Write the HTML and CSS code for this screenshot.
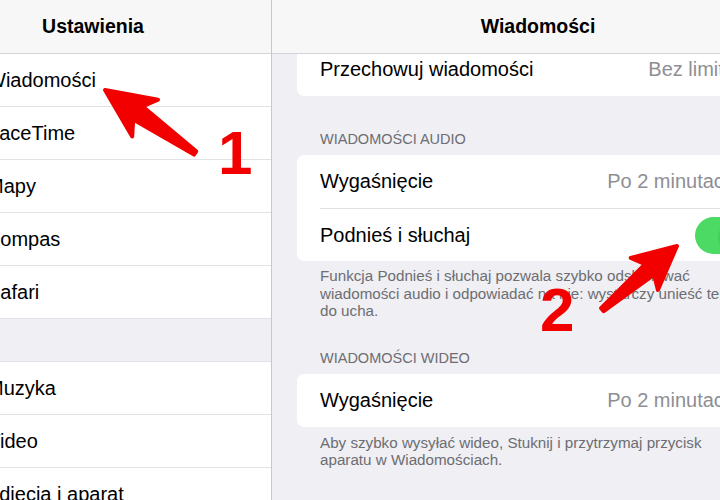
FILE: index.html
```html
<!DOCTYPE html>
<html lang="pl">
<head>
<meta charset="utf-8">
<title>Ustawienia – Wiadomości</title>
<link rel="stylesheet" href="styles.css">
</head>
<body>
<div class="screen">
  <aside class="master">
    <header class="nav">Ustawienia</header>
    <ul class="list">
      <li class="row">Wiadomości</li>
      <li class="row">FaceTime</li>
      <li class="row">Mapy</li>
      <li class="row">Kompas</li>
      <li class="row">Safari</li>
    </ul>
    <div class="group-gap"></div>
    <ul class="list list-top">
      <li class="row">Muzyka</li>
      <li class="row">Video</li>
      <li class="row">Zdjęcia i aparat</li>
    </ul>
  </aside>
  <main class="detail">
    <header class="nav nav-over">Wiadomości</header>
    <div class="content">
      <section class="card">
        <div class="cell">
          <span class="label">Przechowuj wiadomości</span>
          <span class="value">Bez limitu</span>
          <svg class="chev" width="9" height="15" viewBox="0 0 9 15"><path d="M1 1l6.5 6.5L1 14" fill="none" stroke="#c7c7cc" stroke-width="2"/></svg>
        </div>
      </section>
      <h2 class="section-header">Wiadomości audio</h2>
      <section class="card">
        <div class="cell">
          <span class="label">Wygaśnięcie</span>
          <span class="value">Po 2 minutach</span>
          <svg class="chev" width="9" height="15" viewBox="0 0 9 15"><path d="M1 1l6.5 6.5L1 14" fill="none" stroke="#c7c7cc" stroke-width="2"/></svg>
        </div>
        <div class="cell">
          <span class="label">Podnieś i słuchaj</span>
          <span class="toggle"><span class="knob"></span></span>
        </div>
      </section>
      <p class="footer">Funkcja Podnieś i słuchaj pozwala szybko odsłuchiwać<br>wiadomości audio i odpowiadać na nie: wystarczy unieść telefon<br>do ucha.</p>
      <h2 class="section-header after-footer">Wiadomości wideo</h2>
      <section class="card">
        <div class="cell">
          <span class="label">Wygaśnięcie</span>
          <span class="value">Po 2 minutach</span>
          <svg class="chev" width="9" height="15" viewBox="0 0 9 15"><path d="M1 1l6.5 6.5L1 14" fill="none" stroke="#c7c7cc" stroke-width="2"/></svg>
        </div>
      </section>
      <p class="footer footer-video">Aby szybko wysyłać wideo, Stuknij i przytrzymaj przycisk<br>aparatu w Wiadomościach.</p>
    </div>
  </main>
</div>
<div class="annot">
  <svg class="arrows" width="720" height="500" viewBox="0 0 720 500">
    <polygon points="105,90 158,99.7 142.4,106.3 196.2,151.4 194,154.6 133.2,119.5 132.2,136.5" fill="#f20000" stroke="#f20000" stroke-width="4" stroke-linejoin="round"/>
    <polygon points="677,246 630.7,257.9 645.1,264.1 601.1,308.1 603.7,311.1 654.1,274.7 657.9,289.9" fill="#f20000" stroke="#f20000" stroke-width="4" stroke-linejoin="round"/>
  </svg>
  <span class="num num-1">1</span>
  <span class="num num-2">2</span>
</div>
</body>
</html>
```
FILE: styles.css
```css
* { box-sizing: border-box; }
html, body {
  margin: 0;
  padding: 0;
  width: 720px;
  height: 500px;
  overflow: hidden;
  background: #ffffff;
  font-family: "Liberation Sans", Arial, sans-serif;
  color: #000;
}
.screen {
  display: flex;
  width: 889px;
  height: 500px;
  margin-left: -85px;
}
.master {
  width: 357px;
  flex: none;
  background: #efeff4;
  border-right: 1px solid #c8c7cc;
}
.nav {
  height: 54px;
  margin: 0;
  background: #f7f7f7;
  border-bottom: 1px solid #d4d4d8;
  display: flex;
  align-items: center;
  justify-content: center;
  font-weight: bold;
  font-size: 19.5px;
}
.list {
  list-style: none;
  margin: 0;
  padding: 0;
  background: #fff;
}
.list-top { border-top: 1px solid #e2e2e6; }
.row {
  height: 53px;
  display: flex;
  align-items: center;
  padding-left: 72px;
  font-size: 20px;
  border-bottom: 1px solid #e2e2e6;
}
.group-gap { height: 42px; }
.detail {
  width: 532px;
  flex: none;
  background: #efeff4;
}
.nav-over {
  position: relative;
  z-index: 2;
}
.content {
  margin-top: -11px;
}
.card {
  margin: 0 25px;
  background: #fff;
  border-radius: 7px;
  overflow: hidden;
}
.cell {
  height: 53px;
  margin-left: 23px;
  padding-right: 23px;
  display: flex;
  align-items: center;
  font-size: 20px;
}
.cell + .cell {
  border-top: 1px solid #e0e0e4;
}
.value {
  margin-left: auto;
  color: #8e8e93;
}
.chev {
  margin-left: 12px;
  flex: none;
}
.toggle {
  margin-left: auto;
  width: 61px;
  height: 37px;
  border-radius: 19px;
  background: #4cd964;
  display: flex;
  align-items: center;
  justify-content: flex-end;
  padding: 1px;
}
.knob {
  width: 35px;
  height: 35px;
  border-radius: 50%;
  background: #fff;
  box-shadow: 0 2px 3px rgba(0,0,0,0.25);
}
.section-header {
  margin: 0;
  padding: 34px 48px 7px;
  font-size: 14.5px;
  line-height: 18px;
  font-weight: normal;
  text-transform: uppercase;
  color: #6d6d72;
}
.section-header.after-footer { padding-top: 29px; }
.footer {
  margin: 0;
  padding: 6px 48px 0;
  font-size: 15.2px;
  line-height: 17.5px;
  color: #6d6d72;
  white-space: nowrap;
}
.footer-video { padding-top: 7px; }
.annot {
  position: absolute;
  left: 0;
  top: 0;
  width: 720px;
  height: 500px;
  pointer-events: none;
}
.arrows {
  position: absolute;
  left: 0;
  top: 0;
}
.num {
  position: absolute;
  font-family: "Liberation Sans", Arial, sans-serif;
  font-weight: bold;
  font-size: 62px;
  line-height: 1;
  color: #f20000;
}
.num-1 { left: 218px; top: 122px; }
.num-2 { left: 540px; top: 279px; }
```
